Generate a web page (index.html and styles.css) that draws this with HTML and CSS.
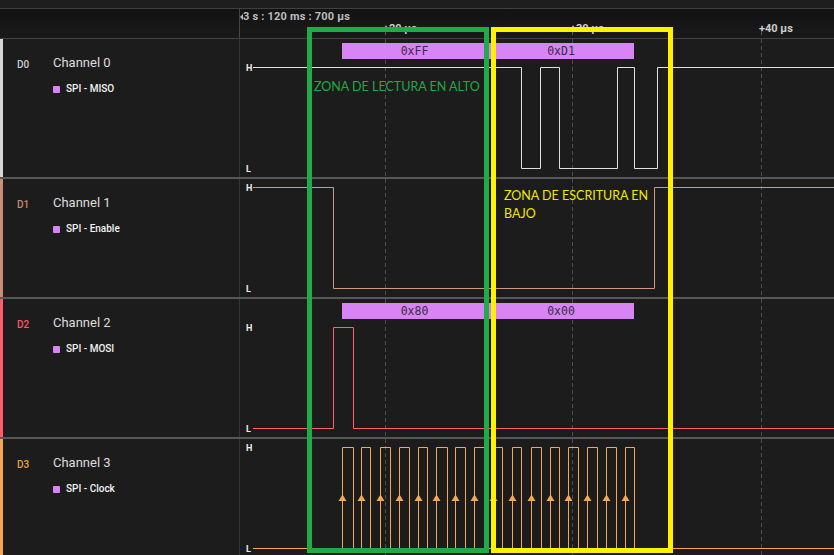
FILE: index.html
```html
<!DOCTYPE html>
<html>
<head>
<meta charset="utf-8">
<link rel="stylesheet" href="styles.css">
</head>
<body>
<div class="app">
  <div class="topstrip"></div>
  <div class="header">
    <div class="hdr-left"></div>
    <div class="hdr-plot">
      <span class="hdr-time">3 s : 120 ms : 700 µs</span>
      <span class="tick" style="left:143px">+20 µs</span>
      <span class="tick" style="left:330px">+30 µs</span>
      <span class="tick" style="left:519px">+40 µs</span>
      <svg class="hdr-grid" width="594" height="29" viewBox="0 0 594 29">
        <line x1="145.5" y1="22" x2="145.5" y2="29"/>
        <line x1="332.5" y1="22" x2="332.5" y2="29"/>
        <line x1="521.5" y1="22" x2="521.5" y2="29"/>
      </svg>
    </div>
  </div>

  <div class="row tall">
    <div class="chan c0">
      <span class="cid">D0</span>
      <div class="cinfo">
        <div class="cname">Channel 0</div>
        <div class="proto"><i class="sq"></i>SPI - MISO</div>
      </div>
    </div>
    <div class="plot">
      <svg class="wave" width="594" height="138" viewBox="0 0 594 138">
        <g class="grid"><line x1="145.5" y1="0" x2="145.5" y2="138"/><line x1="332.5" y1="0" x2="332.5" y2="138"/><line x1="521.5" y1="0" x2="521.5" y2="138"/></g>
        <rect class="dec" x="102" y="4" width="145" height="16"/>
        <rect class="dec" x="248" y="4" width="146" height="16"/>
        <text class="dect" x="174.5" y="16">0xFF</text>
        <text class="dect" x="321" y="16">0xD1</text>
        <polyline class="sig d0" points="13,28.5 281.5,28.5 281.5,129.5 300.5,129.5 300.5,28.5 319.5,28.5 319.5,129.5 377.5,129.5 377.5,28.5 394.5,28.5 394.5,129.5 417.5,129.5 417.5,28.5 594,28.5"/>
        <text class="lvl" x="6" y="31.5">H</text>
        <text class="lvl" x="6" y="132.5">L</text>
      </svg>
    </div>
  </div>

  <div class="row short">
    <div class="chan c1">
      <span class="cid">D1</span>
      <div class="cinfo">
        <div class="cname">Channel 1</div>
        <div class="proto"><i class="sq"></i>SPI - Enable</div>
      </div>
    </div>
    <div class="plot">
      <svg class="wave" width="594" height="118" viewBox="0 0 594 118">
        <g class="grid"><line x1="145.5" y1="0" x2="145.5" y2="118"/><line x1="332.5" y1="0" x2="332.5" y2="118"/><line x1="521.5" y1="0" x2="521.5" y2="118"/></g>
        <polyline class="sig d1" points="13,8.5 93.5,8.5 93.5,109.5 414.5,109.5 414.5,8.5 594,8.5"/>
        <text class="lvl" x="6" y="11.5">H</text>
        <text class="lvl" x="6" y="112.5">L</text>
      </svg>
    </div>
  </div>

  <div class="row tall">
    <div class="chan c2">
      <span class="cid">D2</span>
      <div class="cinfo">
        <div class="cname">Channel 2</div>
        <div class="proto"><i class="sq"></i>SPI - MOSI</div>
      </div>
    </div>
    <div class="plot">
      <svg class="wave" width="594" height="138" viewBox="0 0 594 138">
        <g class="grid"><line x1="145.5" y1="0" x2="145.5" y2="138"/><line x1="332.5" y1="0" x2="332.5" y2="138"/><line x1="521.5" y1="0" x2="521.5" y2="138"/></g>
        <rect class="dec" x="102" y="4" width="145" height="16"/>
        <rect class="dec" x="248" y="4" width="146" height="16"/>
        <text class="dect" x="174.5" y="16">0x80</text>
        <text class="dect" x="321" y="16">0x00</text>
        <polyline class="sig d2" points="13,129.5 93.5,129.5 93.5,28.5 113.5,28.5 113.5,129.5 594,129.5"/>
        <text class="lvl" x="6" y="31.5">H</text>
        <text class="lvl" x="6" y="132.5">L</text>
      </svg>
    </div>
  </div>

  <div class="row last">
    <div class="chan c3">
      <span class="cid">D3</span>
      <div class="cinfo">
        <div class="cname">Channel 3</div>
        <div class="proto"><i class="sq"></i>SPI - Clock</div>
      </div>
    </div>
    <div class="plot">
      <svg class="wave" width="594" height="116" viewBox="0 0 594 116">
        <g class="grid"><line x1="145.5" y1="0" x2="145.5" y2="116"/><line x1="332.5" y1="0" x2="332.5" y2="116"/><line x1="521.5" y1="0" x2="521.5" y2="116"/></g>
        <polyline class="sig d3" points="13,109.5 102.5,109.5 102.5,8.5 113.5,8.5 113.5,109.5 121.5,109.5 121.5,8.5 130.5,8.5 130.5,109.5 140.5,109.5 140.5,8.5 150.5,8.5 150.5,109.5 159.5,109.5 159.5,8.5 169.5,8.5 169.5,109.5 178.5,109.5 178.5,8.5 187.5,8.5 187.5,109.5 196.5,109.5 196.5,8.5 207.5,8.5 207.5,109.5 215.5,109.5 215.5,8.5 225.5,8.5 225.5,109.5 234.5,109.5 234.5,8.5 244.5,8.5 244.5,109.5 253.5,109.5 253.5,8.5 262.5,8.5 262.5,109.5 272.5,109.5 272.5,8.5 281.5,8.5 281.5,109.5 291.5,109.5 291.5,8.5 301.5,8.5 301.5,109.5 310.5,109.5 310.5,8.5 319.5,8.5 319.5,109.5 328.5,109.5 328.5,8.5 338.5,8.5 338.5,109.5 347.5,109.5 347.5,8.5 357.5,8.5 357.5,109.5 366.5,109.5 366.5,8.5 376.5,8.5 376.5,109.5 385.5,109.5 385.5,8.5 394.5,8.5 394.5,109.5 594,109.5"/>
        <g class="arrows">
          <polygon points="102.5,55.5 98.5,62 106.5,62"/>
          <polygon points="121.5,55.5 117.5,62 125.5,62"/>
          <polygon points="140.5,55.5 136.5,62 144.5,62"/>
          <polygon points="159.5,55.5 155.5,62 163.5,62"/>
          <polygon points="178.5,55.5 174.5,62 182.5,62"/>
          <polygon points="196.5,55.5 192.5,62 200.5,62"/>
          <polygon points="215.5,55.5 211.5,62 219.5,62"/>
          <polygon points="234.5,55.5 230.5,62 238.5,62"/>
          <polygon points="253.5,55.5 249.5,62 257.5,62"/>
          <polygon points="272.5,55.5 268.5,62 276.5,62"/>
          <polygon points="291.5,55.5 287.5,62 295.5,62"/>
          <polygon points="310.5,55.5 306.5,62 314.5,62"/>
          <polygon points="328.5,55.5 324.5,62 332.5,62"/>
          <polygon points="347.5,55.5 343.5,62 351.5,62"/>
          <polygon points="366.5,55.5 362.5,62 370.5,62"/>
          <polygon points="385.5,55.5 381.5,62 389.5,62"/>
        </g>
        <text class="lvl" x="6" y="11.5">H</text>
        <text class="lvl" x="6" y="112.5">L</text>
      </svg>
    </div>
  </div>

  <div class="mark mark-green">
    <div class="note">ZONA DE LECTURA EN ALTO</div>
  </div>
  <div class="mark mark-yellow">
    <div class="note">ZONA DE ESCRITURA EN<br>BAJO</div>
  </div>
</div>
</body>
</html>
```

FILE: styles.css
```css
* { box-sizing: border-box; }
html, body { margin: 0; padding: 0; background: #1c1c1c; }
body {
  width: 834px;
  height: 555px;
  overflow: hidden;
  font-family: Roboto, "Liberation Sans", sans-serif;
}
.app { position: relative; width: 834px; height: 555px; background: #1c1c1c; }

.topstrip { height: 9px; background: #1e1e1e; border-bottom: 1px solid #404040; }
.header {
  display: flex;
  height: 30px;
  border-bottom: 1px solid #404040;
  background: linear-gradient(#131313, #1a1a1a);
}
.hdr-left { width: 240px; border-right: 1px solid #454545; }
.hdr-plot { position: relative; flex: 1; }
.hdr-time {
  position: absolute;
  left: 3px;
  top: 1px;
  font-size: 11px;
  line-height: 13px;
  font-weight: 700;
  letter-spacing: 0.2px;
  color: #bdbdbd;
}
.hdr-time::before {
  content: "";
  position: absolute;
  left: -3px;
  top: 4px;
  border-right: 3px solid #bdbdbd;
  border-top: 3px solid transparent;
  border-bottom: 3px solid transparent;
}
.tick {
  position: absolute;
  top: 13px;
  font-size: 11px;
  line-height: 13px;
  font-weight: 700;
  color: #cfcfcf;
}
.hdr-grid { position: absolute; left: 0; top: 0; }
.hdr-grid line { stroke: #555; stroke-dasharray: 4 3; stroke-width: 1; }

.row { display: flex; border-bottom: 2px solid #575757; }
.row.tall { height: 140px; }
.row.short { height: 120px; }
.row.last { height: 116px; border-bottom: 0; }

.chan {
  width: 240px;
  flex: none;
  border-left: 3px solid #d6d6d6;
  border-right: 1px solid #353535;
  padding: 16px 0 0 14px;
  display: flex;
  align-items: flex-start;
}
.c0 { border-left-color: #d6d6d6; }
.c1 { border-left-color: #c98f74; }
.c2 { border-left-color: #ff5c6c; }
.c3 { border-left-color: #f7a84e; }
.cid {
  width: 36px;
  margin-top: 4px;
  font-size: 10px;
  line-height: 12px;
  font-weight: 500;
}
.c0 .cid { color: #c9ced6; }
.c1 .cid { color: #c98f6f; }
.c2 .cid { color: #ff5566; }
.c3 .cid { color: #e9a040; }
.cname { font-size: 13px; line-height: 16px; color: #dcdcdc; }
.proto {
  margin-top: 12px;
  display: flex;
  align-items: center;
  gap: 6px;
  font-size: 10px;
  line-height: 12px;
  font-weight: 500;
  color: #f2f2f2;
}
.sq { width: 7px; height: 7px; border-radius: 1px; background: #d884f4; display: block; }

.plot { flex: 1; }
.wave { display: block; }
.grid line { stroke: #4e4e4e; stroke-dasharray: 4 3; stroke-width: 1; }
.dec { fill: #d884f4; }
.dect { font-family: "DejaVu Sans Mono", monospace; font-size: 11.5px; fill: #3a2a47; text-anchor: middle; }
.sig { fill: none; stroke-width: 1; }
.d0 { stroke: #e0e0e0; }
.d1 { stroke: #cc9a80; }
.d2 { stroke: #ff6170; }
.d3 { stroke: #f7a84e; }
.arrows polygon { fill: #f7a84e; }
.lvl { font-family: Roboto, sans-serif; font-size: 9px; font-weight: 700; fill: #ececec; }

.mark { position: absolute; top: 27px; width: 182px; height: 526px; border: 5px solid; }
.mark-green { left: 307px; border-color: #20ab48; padding: 46px 0 0 2px; }
.mark-yellow { left: 491px; border-color: #fff200; padding: 155px 0 0 8px; }
.note { font-family: Lato, "Open Sans", sans-serif; font-size: 12.5px; line-height: 18px; white-space: nowrap; }
.mark-green .note { color: #22a846; }
.mark-yellow .note { color: #f2e600; }
```
